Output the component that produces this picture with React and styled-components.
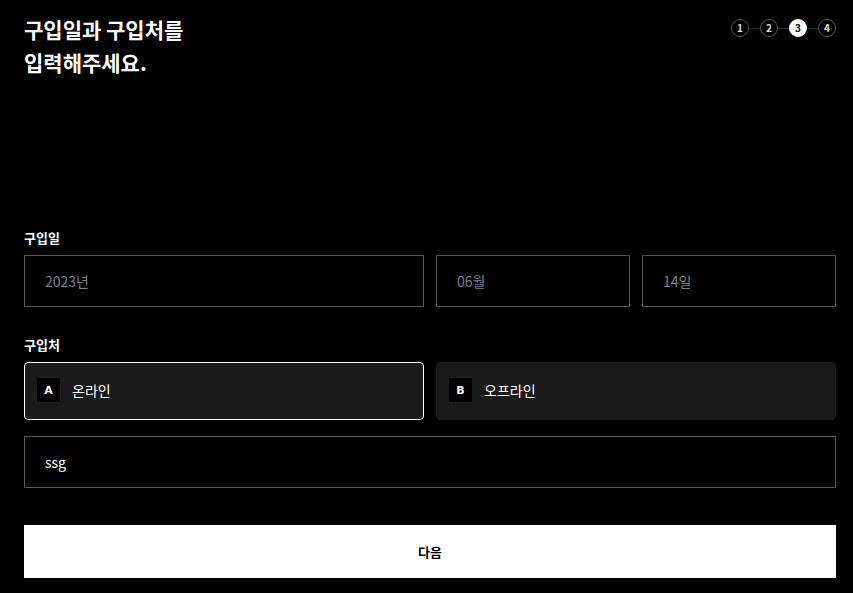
import { Fragment } from "react";
import styled, { createGlobalStyle } from "styled-components";

const COLORS = {
  BLACK: "#000000",
  WHITE: "#FFFFFF",
  BORDER: "#555555",
  CARD: "#1A1A1A",
  MUTED: "#7A7F88",
  LINE: "#2A2A2A",
};

const GlobalStyle = createGlobalStyle`
  html, body {
    margin: 0;
    background-color: ${COLORS.BLACK};
    color: ${COLORS.WHITE};
    font-family: "Noto Sans CJK KR", "Noto Sans", sans-serif;
  }
`;

const Page = styled.div`
  padding: 13px 17px 15px 24px;
`;

const Top = styled.div`
  display: flex;
  justify-content: space-between;
  align-items: flex-start;
  height: 216px;
`;

const Title = styled.h1`
  margin: 0;
  font-size: 21px;
  font-weight: 700;
  line-height: 33px;
`;

const Steps = styled.div`
  display: flex;
  align-items: center;
  margin-top: 6px;
`;

const Connector = styled.span`
  width: 11px;
  height: 1px;
  background-color: ${COLORS.LINE};
`;

const Step = styled.span`
  width: 18px;
  height: 18px;
  box-sizing: border-box;
  border-radius: 50%;
  border: 1px solid ${(p) => (p.$active ? COLORS.WHITE : COLORS.BORDER)};
  background-color: ${(p) => (p.$active ? COLORS.WHITE : "transparent")};
  color: ${(p) => (p.$active ? COLORS.BLACK : "#DDDDDD")};
  font-size: 10px;
  font-weight: 700;
  display: flex;
  align-items: center;
  justify-content: center;
  line-height: 1;
`;

const Label = styled.div`
  font-size: 13px;
  font-weight: 700;
  line-height: 18px;
  margin-bottom: 8px;
`;

const DateRow = styled.div`
  display: grid;
  grid-template-columns: 400px 1fr 1fr;
  gap: 12px;
  margin-bottom: 29px;
`;

const Field = styled.div`
  height: 52px;
  box-sizing: border-box;
  border: 1px solid ${COLORS.BORDER};
  padding: 0 20px;
  display: flex;
  align-items: center;
  font-size: 14px;
  color: ${(p) => (p.$muted ? COLORS.MUTED : COLORS.WHITE)};
`;

const OptionRow = styled.div`
  display: grid;
  grid-template-columns: 1fr 1fr;
  gap: 12px;
  margin-bottom: 16px;
`;

const Option = styled.div`
  height: 58px;
  box-sizing: border-box;
  border-radius: 4px;
  background-color: ${COLORS.CARD};
  border: 1px solid ${(p) => (p.$selected ? COLORS.WHITE : COLORS.CARD)};
  display: flex;
  align-items: center;
  gap: 12px;
  padding: 0 12px 2px;
  font-size: 14px;
`;

const Badge = styled.span`
  width: 23px;
  height: 24px;
  background-color: ${COLORS.BLACK};
  display: flex;
  align-items: center;
  justify-content: center;
  font-family: "DejaVu Sans", sans-serif;
  font-size: 11px;
  font-weight: 700;
`;

const NextButton = styled.button`
  display: block;
  width: 100%;
  height: 53px;
  margin-top: 37px;
  border: none;
  background-color: ${COLORS.WHITE};
  color: ${COLORS.BLACK};
  font-family: inherit;
  font-size: 13px;
  font-weight: 700;
  cursor: pointer;
`;

const App = () => {
  const steps = [1, 2, 3, 4];
  return (
    <>
      <GlobalStyle />
      <Page>
        <Top>
          <Title>
            구입일과 구입처를
            <br />
            입력해주세요.
          </Title>
          <Steps>
            {steps.map((n, i) => (
              <Fragment key={n}>
                {i > 0 && <Connector />}
                <Step $active={n === 3}>{n}</Step>
              </Fragment>
            ))}
          </Steps>
        </Top>

        <Label>구입일</Label>
        <DateRow>
          <Field $muted>2023년</Field>
          <Field $muted>06월</Field>
          <Field $muted>14일</Field>
        </DateRow>

        <Label>구입처</Label>
        <OptionRow>
          <Option $selected>
            <Badge>A</Badge>
            온라인
          </Option>
          <Option>
            <Badge>B</Badge>
            오프라인
          </Option>
        </OptionRow>
        <Field>ssg</Field>

        <NextButton>다음</NextButton>
      </Page>
    </>
  );
};

export default App;
